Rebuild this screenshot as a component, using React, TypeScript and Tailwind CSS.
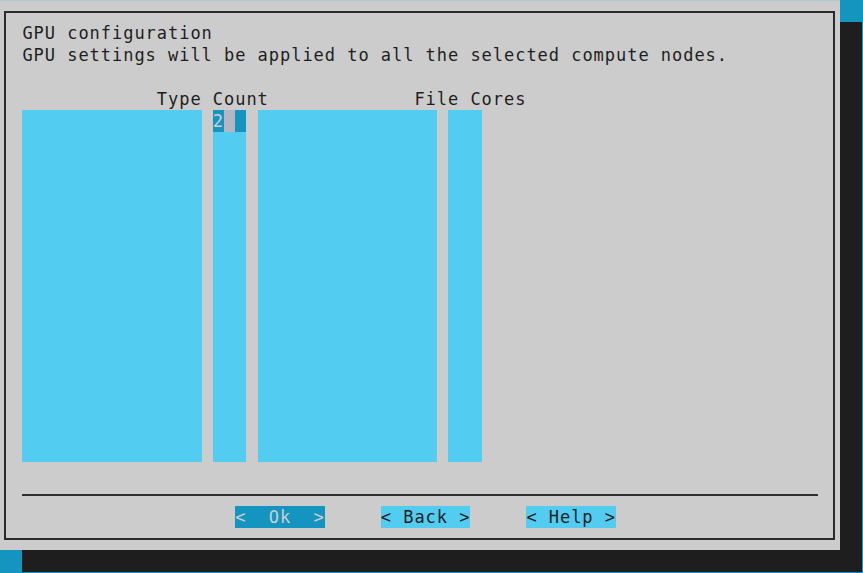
import React from 'react';

// terminal cell: 11.2px wide, 22px tall
const CELL = 'h-[22px] leading-[22px]';

function ListBox({ width, children }: { width: string; children?: React.ReactNode }) {
  return <div className={`${width} h-[352px] bg-[#52ccf0]`}>{children}</div>;
}

function Button({ label, focused }: { label: string; focused?: boolean }) {
  return (
    <div
      className={
        `${CELL} w-[89.6px] whitespace-pre ` +
        (focused ? 'bg-[#1395bf] text-[#cfcfcf]' : 'bg-[#52ccf0] text-[#1e1e1e]')
      }
    >
      {label}
    </div>
  );
}

export default function App() {
  return (
    <div
      className="w-[863px] h-[573px] overflow-hidden bg-[#1395bf] text-[#1e1e1e] text-[17px] tracking-[0.965px]"
      style={{ fontFamily: '"DejaVu Sans Mono", "Liberation Mono", monospace' }}
    >
      <div className="w-[840px] h-[550px] bg-[#cccccc] border-t border-[#a9cad6] shadow-[22px_22px_0_0_#1e1e1e] pt-[10px] pl-[4px]">
        <div className="w-[831px] h-[529px] border-2 border-[#2a2a2a] pt-[9px] pl-[16.4px] flex flex-col">
          <div className={CELL}>GPU configuration</div>
          <div className={CELL}>GPU settings will be applied to all the selected compute nodes.</div>
          <div className={CELL} />
          <div className={`${CELL} whitespace-pre`}>{'            Type Count             File Cores'}</div>

          {/* lists */}
          <div className="flex gap-[11.2px]">
            <ListBox width="w-[179.2px]" />
            <ListBox width="w-[33.6px]">
              <div className={`${CELL} flex`}>
                <div className="w-[11.2px] bg-[#1395bf] text-[#cfcfcf]">2</div>
                <div className="w-[11.2px] bg-[#b6b6c2]" />
                <div className="w-[11.2px] bg-[#1395bf]" />
              </div>
            </ListBox>
            <ListBox width="w-[179.2px]" />
            <ListBox width="w-[33.6px]" />
          </div>

          <div className={CELL} />
          <div className="h-[22px] flex items-center">
            <div className="w-[795.2px] h-[2px] bg-[#2e2e2e]" />
          </div>

          {/* buttons */}
          <div className="flex pl-[212.8px] gap-[56px]">
            <Button label="<  Ok  >" focused />
            <Button label="< Back >" />
            <Button label="< Help >" />
          </div>
        </div>
      </div>
    </div>
  );
}
